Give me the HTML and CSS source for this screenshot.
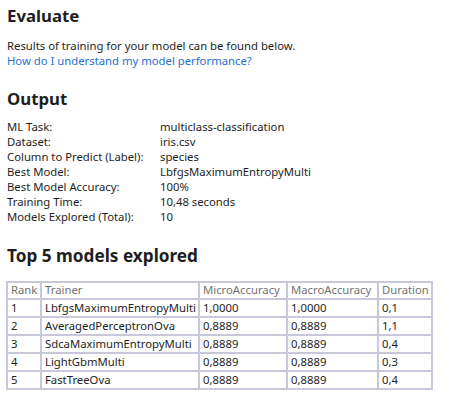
FILE: index.html
```html
<!DOCTYPE html>
<html>
<head>
<meta charset="utf-8">
<link rel="stylesheet" href="styles.css">
</head>
<body>
<div class="page">
  <h1 class="title">Evaluate</h1>
  <p class="intro">Results of training for your model can be found below.<br><a class="link" href="#">How do I understand my model performance?</a></p>

  <h2 class="title title-output">Output</h2>
  <div class="info">
    <span class="k">ML Task:</span><span class="v">multiclass-classification</span>
    <span class="k">Dataset:</span><span class="v">iris.csv</span>
    <span class="k">Column to Predict (Label):</span><span class="v">species</span>
    <span class="k">Best Model:</span><span class="v">LbfgsMaximumEntropyMulti</span>
    <span class="k">Best Model Accuracy:</span><span class="v">100%</span>
    <span class="k">Training Time:</span><span class="v">10,48 seconds</span>
    <span class="k">Models Explored (Total):</span><span class="v">10</span>
  </div>

  <h2 class="title title-top">Top 5 models explored</h2>
  <table class="models">
    <thead>
      <tr><th class="c-rank">Rank</th><th class="c-trainer">Trainer</th><th class="c-micro">MicroAccuracy</th><th class="c-macro">MacroAccuracy</th><th class="c-dur">Duration</th></tr>
    </thead>
    <tbody>
      <tr><td>1</td><td>LbfgsMaximumEntropyMulti</td><td>1,0000</td><td>1,0000</td><td>0,1</td></tr>
      <tr><td>2</td><td>AveragedPerceptronOva</td><td>0,8889</td><td>0,8889</td><td>1,1</td></tr>
      <tr><td>3</td><td>SdcaMaximumEntropyMulti</td><td>0,8889</td><td>0,8889</td><td>0,4</td></tr>
      <tr><td>4</td><td>LightGbmMulti</td><td>0,8889</td><td>0,8889</td><td>0,3</td></tr>
      <tr><td>5</td><td>FastTreeOva</td><td>0,8889</td><td>0,8889</td><td>0,4</td></tr>
    </tbody>
  </table>
</div>
</body>
</html>
```

FILE: styles.css
```css
html, body {
  margin: 0;
  padding: 0;
  background: #ffffff;
}

.page {
  padding: 4px 7px 0 7px;
  font-family: "Noto Sans", "Open Sans", sans-serif;
  font-size: 11.3px;
  line-height: 15px;
  color: #1e1e1e;
}

.title {
  margin: 0;
  font-size: 16.8px;
  line-height: 24px;
  font-weight: 700;
  color: #1e1e1e;
}

.intro {
  margin: 10px 0 0 0;
}

.link {
  color: #1f6fd1;
  text-decoration: none;
}

.title-output {
  margin-top: 19px;
}

.info {
  margin-top: 8px;
  display: grid;
  grid-template-columns: 153px auto;
}

.title-top {
  font-size: 17.2px;
  margin-top: 20px;
}

.models {
  margin-top: 13px;
  margin-left: -1px;
  width: 427px;
  table-layout: fixed;
  border-collapse: separate;
  border-spacing: 0;
  border: 1px solid #c8c8da;
}

.models th,
.models td {
  box-sizing: border-box;
  border: 1px solid #c8c8da;
  padding: 0 3px 1px 3px;
  text-align: left;
  white-space: nowrap;
  overflow: hidden;
  height: 18px;
  line-height: 14px;
  vertical-align: middle;
}

.models th {
  font-weight: 400;
  color: #727272;
  height: 16px;
}

.c-rank { width: 34px; }
.c-trainer { width: 158px; }
.c-micro { width: 88px; }
.c-macro { width: 91px; }
.c-dur { width: 54px; }
```
